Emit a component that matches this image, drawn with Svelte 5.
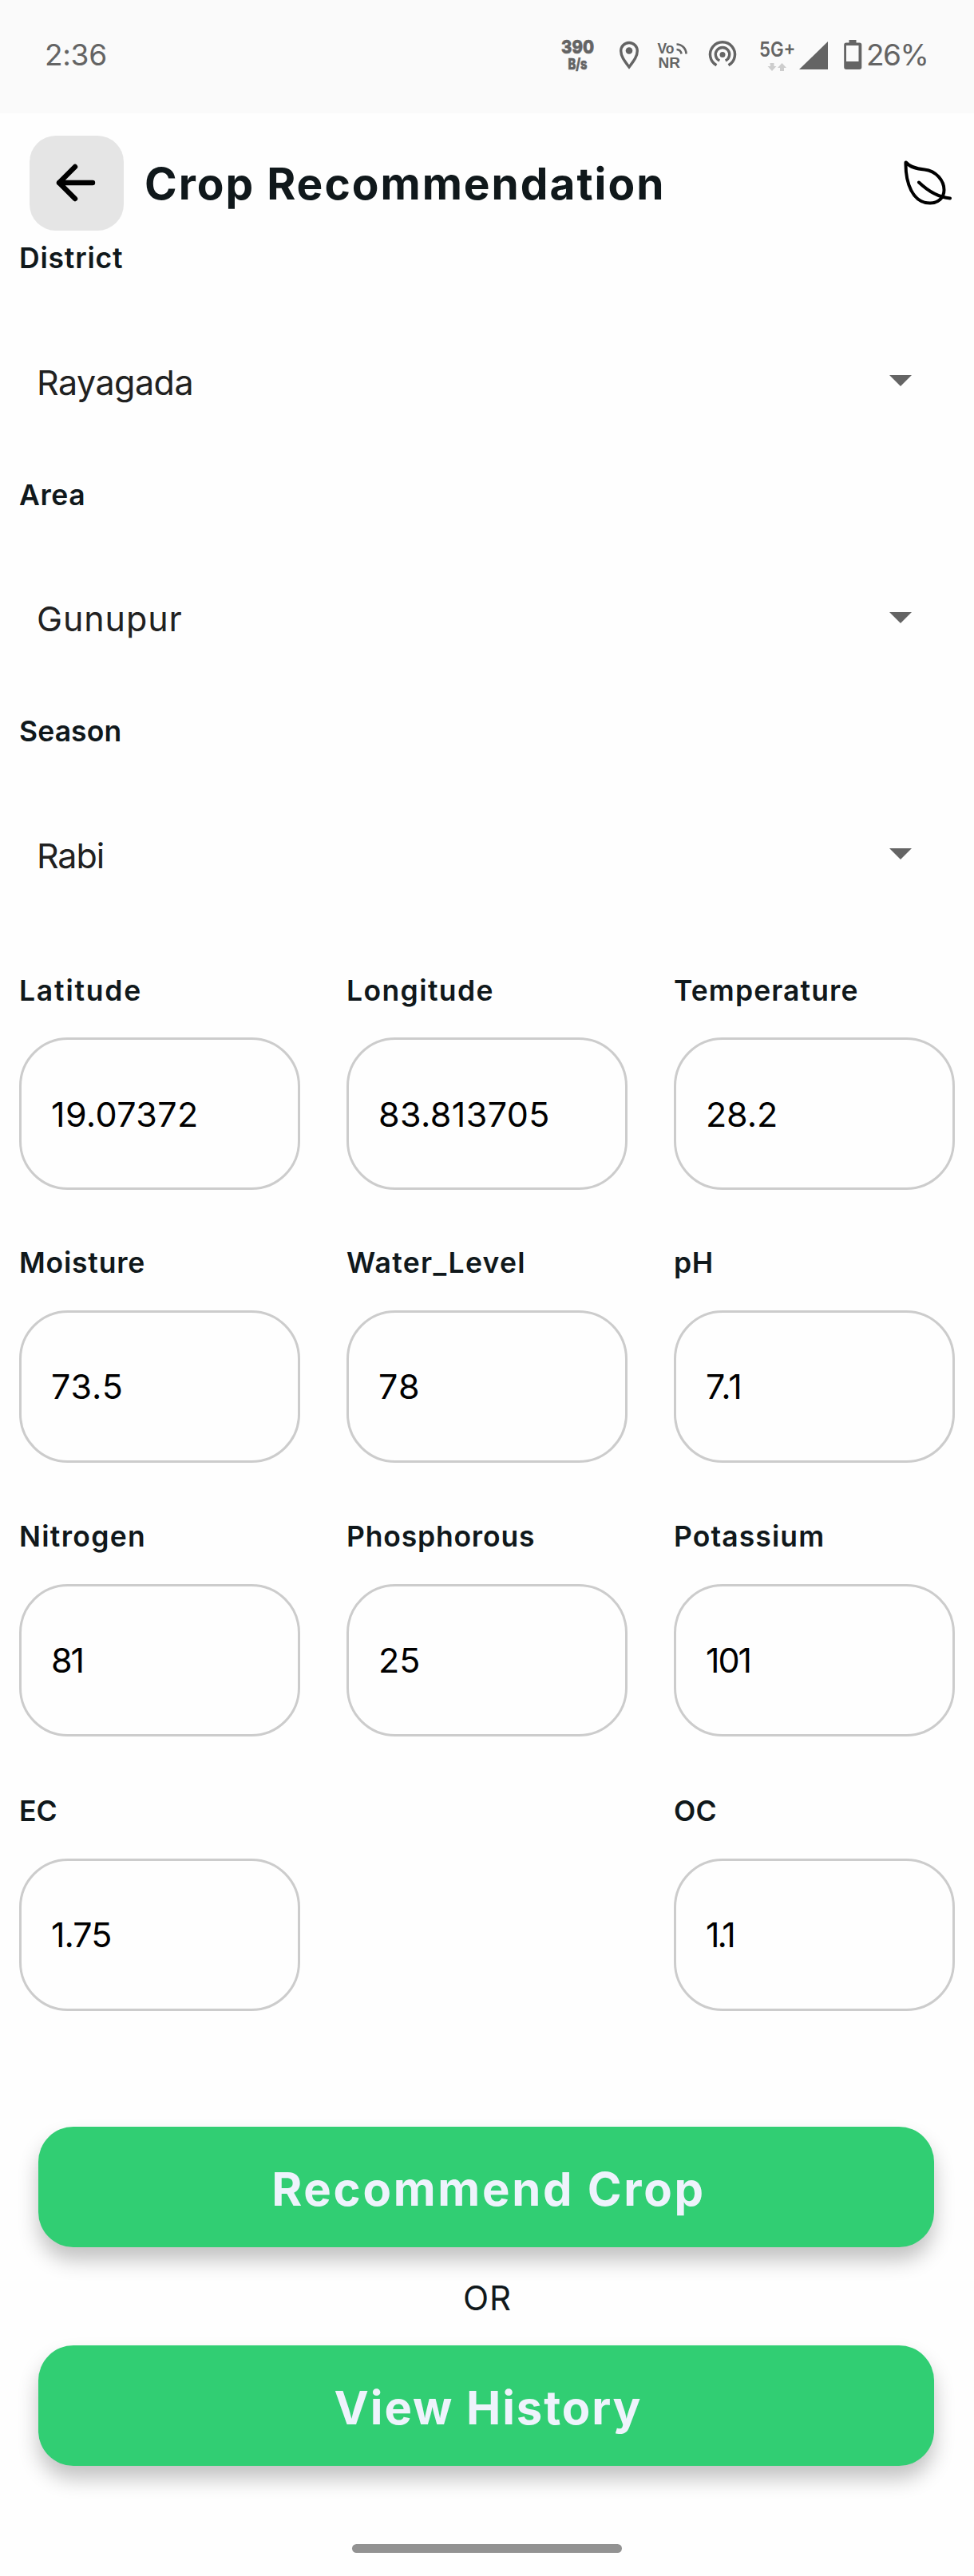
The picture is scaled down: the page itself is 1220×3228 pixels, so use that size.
<script>
  // Each entry: label, value, label tracking, value tracking (px).
  const selects = [
    ['District', 'Rayagada', 0.8, -0.5],
    ['Area', 'Gunupur', 0.6, 0.9],
    ['Season', 'Rabi', 0.1, -1.1],
  ];
  const cells = [
    ['Latitude', '19.07372', 1.8, 0.4],
    ['Longitude', '83.813705', 1.4, 0.4],
    ['Temperature', '28.2', 1.1, -0.1],
    ['Moisture', '73.5', 0.8, 0.9],
    ['Water_Level', '78', 1.3, 1.2],
    ['pH', '7.1', 0.6, 0.3],
    ['Nitrogen', '81', 1.3, -2.2],
    ['Phosphorous', '25', 0.8, 0],
    ['Potassium', '101', 1.1, -2],
    ['EC', '1.75', 0, -1],
    null,
    ['OC', '1.1', 0.2, -3],
  ];
</script>

<div class="screen">
  <div class="status">
    <span class="time">2:36</span>
    <svg class="tray" viewBox="690 40 400 56" width="400" height="56">
      <g fill="#646464" stroke="none" font-family="Inter, sans-serif">
        <text class="heavy" x="703" y="66.300" font-size="23.500" font-weight="800" textLength="41" lengthAdjust="spacingAndGlyphs">390</text>
        <text class="heavy" x="711.500" y="86" font-size="19" font-weight="800" textLength="24" lengthAdjust="spacingAndGlyphs">B/s</text>
        <text class="arial" x="823.500" y="65.500" font-size="18" font-weight="700" textLength="21" lengthAdjust="spacingAndGlyphs">Vo</text>
        <text class="arial" x="824.500" y="84" font-size="18.500" font-weight="700" textLength="27.500" lengthAdjust="spacingAndGlyphs">NR</text>
        <text x="951" y="69.500" font-size="25" font-weight="600" textLength="45.500" lengthAdjust="spacingAndGlyphs">5G+</text>
        <circle cx="788" cy="62.500" r="4.300" />
        <circle cx="905" cy="67.500" r="3.500" />
        <path d="M1037 51V86H1001Z" />
        <path fill-rule="evenodd" d="M1063.500 49h9v3.500h4q2.800 0 2.800 2.800v28q0 2.700-2.800 2.700h-16.500q-2.800 0-2.800-2.700v-28q0-2.800 2.800-2.800h3.500zM1060 56v20h15.500V56z" />
        <path fill="#cdcdcd" d="M964.500 78h5v4h3l-5.500 6-5.500-6h3.500zM977 88h5v-4h3l-5.500-6-5.500 6h3z" />
      </g>
      <g fill="none" stroke="#646464" stroke-width="3.400">
        <path d="M788 83C782 75 777.700 69.500 777.700 62.800a10.300 10.300 0 0 1 20.600 0C798.300 69.500 794 75 788 83Z" />
        <path d="M897.500 80.800a15.500 15.500 0 1 1 15 0M901.300 75a8.700 8.700 0 1 1 7.400 0" />
        <path d="M847.500 54.500a12 12 0 0 1 12 12M847.500 61a6.500 6.500 0 0 1 6 5.500" stroke-width="2.600" />
      </g>
    </svg>
    <span class="battery">26%</span>
  </div>

  <header>
    <button class="back" aria-label="Back">
      <svg viewBox="0 0 118 119" width="118" height="119"><path d="M79 59H37M57 39L37 59L57 79" fill="none" stroke="#000" stroke-width="6.400" stroke-linecap="round" stroke-linejoin="round" /></svg>
    </button>
    <h1>Crop Recommendation</h1>
    <svg class="leaf" viewBox="1130 200 66 60" width="66" height="60">
      <path d="M1135 203.500C1140 210 1149 211.500 1158 212.500C1173 214 1182.500 227 1182.500 238C1182.500 248 1175 254.500 1165 254.500C1143 254.500 1134 229 1134.500 203.500M1151 228.500C1162 239 1174 247 1190 248.500" fill="none" stroke="#000" stroke-width="4" stroke-linecap="round" stroke-linejoin="round" />
    </svg>
  </header>

  <main>
    {#each selects as [label, value, lt, vt]}
      <section class="field">
        <span class="label" style:letter-spacing="{lt}px">{label}</span>
        <div class="select">
          <span style:letter-spacing="{vt}px">{value}</span>
          <svg class="caret" viewBox="0 0 28 14" width="28" height="14"><path d="M0 0H28L14 14Z" fill="#646464" /></svg>
        </div>
      </section>
    {/each}

    <div class="grid">
      {#each cells as cell}
        {#if cell}
          <div class="cell">
            <span class="label" style:letter-spacing="{cell[2]}px">{cell[0]}</span>
            <div class="input" style:letter-spacing="{cell[3]}px">{cell[1]}</div>
          </div>
        {:else}
          <div></div>
        {/if}
      {/each}
    </div>

    <div class="actions">
      <button class="primary recommend">Recommend Crop</button>
      <span class="or">OR</span>
      <button class="primary history">View History</button>
    </div>
  </main>
  <div class="home"></div>
</div>

<style>
  :global(body) { margin: 0; background: #fefefe; }
  .screen { width: 1220px; height: 3228px; overflow: hidden; background: #fefefe; color: #10181b; font-family: Inter, "Open Sans", sans-serif; display: flex; flex-direction: column; }
  button { border: 0; padding: 0; margin: 0; font-family: inherit; }
  svg { display: block; flex: none; }
  .status { box-sizing: border-box; flex: none; height: 142px; padding: 0 59px 5px 56px; background: #fafafa; display: flex; align-items: center; color: #646464; font-size: 37px; }
  .time { letter-spacing: -0.3px; }
  .tray { margin-left: auto; margin-right: -5px; }
  .heavy { stroke: #646464; stroke-width: 0.7px; }
  .arial { font-family: "Liberation Sans", Arial, sans-serif; }
  .battery { width: 76px; white-space: nowrap; letter-spacing: -1.500px; }
  header { box-sizing: border-box; flex: none; height: 157px; padding: 28px 24px 10px 37px; display: flex; align-items: center; }
  .back { width: 118px; height: 119px; border-radius: 33px; background: #e5e5e5; flex: none; }
  h1 { margin: 0 0 0 26px; font-size: 55px; font-weight: 700; line-height: 70px; letter-spacing: 2px; white-space: nowrap; }
  .leaf { margin-left: auto; }
  main { flex: none; }
  .field { height: 296.500px; }
  .label { display: block; height: 50px; line-height: 50px; font-size: 35.500px; font-weight: 600; white-space: nowrap; }
  .field .label { padding-left: 24px; }
  .select { margin-top: 70px; height: 119px; padding: 0 78px 0 46px; display: flex; align-items: center; justify-content: space-between; font-size: 43px; color: #212121; }
  .caret { margin-bottom: 3px; }
  .grid { margin: 28px 24px 0; display: grid; grid-template-columns: repeat(3, 352px); grid-template-rows: 341.500px 343.300px 344.200px 274.500px; column-gap: 58px; }
  .input { box-sizing: border-box; margin-top: 33.500px; height: 191px; border: 3px solid #ccc; border-radius: 61px; padding-left: 37px; display: flex; align-items: center; font-size: 43px; color: #000; }
  .actions { margin: 145px 50px 0 48px; display: flex; flex-direction: column; }
  .primary { height: 151px; padding-top: 5px; border-radius: 44px; background: #31ce73; color: #eef3fc; font-size: 58px; font-weight: 700; box-shadow: 0 16px 26px rgba(0, 0, 0, .24); }
  .recommend { padding-left: 6px; letter-spacing: 2.700px; }
  .history { padding-left: 5px; letter-spacing: 1.900px; }
  .or { height: 123px; padding-left: 3px; line-height: 128px; text-align: center; font-size: 42px; letter-spacing: 1px; }
  .home { flex: none; margin: 98px auto 0; width: 338px; height: 11px; border-radius: 6px; background: #929292; }
</style>
